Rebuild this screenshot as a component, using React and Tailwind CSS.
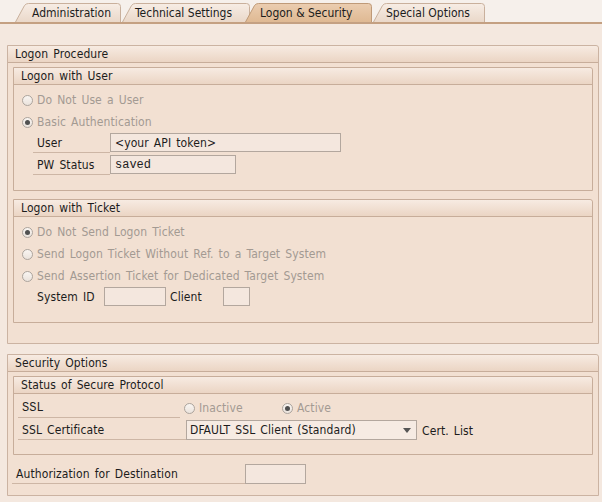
import React from "react";

const font = { fontFamily: '"DejaVu Sans Condensed", "DejaVu Sans", sans-serif' };

function Tab({ label, width, active, pl, className = "" }) {
  const h = 19;
  const d = `M0.5,${h} L9.5,2.5 Q11,0.5 13.5,0.5 L${width - 3.5},0.5 Q${width - 0.5},0.5 ${width - 0.5},3.5 L${width - 0.5},${h}`;
  const gid = active ? "tabA" : "tabI";
  return (
    <div className={`relative h-[19px] shrink-0 ${className}`} style={{ width }}>
      <svg className="absolute inset-0" width={width} height={h}>
        <defs>
          <linearGradient id="tabI" x1="0" y1="0" x2="0" y2="1">
            <stop offset="0" stopColor="#f7ede5" />
            <stop offset="1" stopColor="#ead8c9" />
          </linearGradient>
          <linearGradient id="tabA" x1="0" y1="0" x2="0" y2="1">
            <stop offset="0" stopColor="#ebcdb0" />
            <stop offset="1" stopColor="#dfb993" />
          </linearGradient>
        </defs>
        <path d={d} fill={`url(#${gid})`} stroke={active ? "#bf9a78" : "#c9b09c"} strokeWidth="1" />
      </svg>
      <span
        className="absolute top-[2px] text-[12px] leading-[16px] text-[#1c1c1c] whitespace-nowrap"
        style={{ left: pl }}
      >
        {label}
      </span>
    </div>
  );
}

function Radio({ checked, label, color = "text-[#a39a92]" }) {
  return (
    <div className="flex items-center">
      <span className="relative w-[11px] h-[11px] rounded-full border border-[#aca49d] bg-gradient-to-b from-[#f9f5f2] to-[#ebe3dc] flex items-center justify-center">
        {checked && <span className="w-[5px] h-[5px] rounded-full bg-[#505050]" />}
      </span>
      <span className={`ml-[4px] text-[12px] leading-[14px] ${color} whitespace-nowrap`}>{label}</span>
    </div>
  );
}

function GroupHeader({ title }) {
  return (
    <div className="h-[17px] border-b border-[#c7ad9a] bg-gradient-to-b from-[#f7ebe2] to-[#ebd5c4] rounded-tr-[3px] pl-[7px] text-[12px] leading-[17px] text-[#1c1c1c]">
      {title}
    </div>
  );
}

function Input({ width, children, mono }) {
  return (
    <div
      className={`h-[19px] border border-[#b3a79e] bg-[#f4e7de] pl-[4px] text-[12px] leading-[18px] text-[#1c1c1c] whitespace-nowrap overflow-hidden shrink-0 ${
        mono ? "font-['Liberation_Mono',monospace] tracking-normal [word-spacing:0px]" : ""
      }`}
      style={{ width }}
    >
      {children}
    </div>
  );
}

function Label({ width, children, mono, pl = 4 }) {
  return (
    <div
      className={`h-[20px] border-b border-[#cdb6a5] pt-[2px] text-[12px] leading-[17px] text-[#1c1c1c] whitespace-nowrap shrink-0 ${
        mono ? "font-['Liberation_Mono',monospace] tracking-normal [word-spacing:0px]" : ""
      }`}
      style={{ width, paddingLeft: pl }}
    >
      {children}
    </div>
  );
}

export default function App() {
  return (
    <div
      className="w-[602px] h-[502px] bg-[#f4e8df] overflow-hidden tracking-[0.1px] [word-spacing:1.5px]"
      style={font}
    >
      {/* Tab strip */}
      <div className="bg-[#f6f0eb] pt-[3px] pl-[15px] flex border-b-2 border-[#c4a082] h-[24px] tracking-normal [word-spacing:0px]">
        <Tab label="Administration" width={106} pl={17} />
        <Tab label="Technical Settings" width={128} pl={13} className="ml-[1px]" />
        <Tab label="Logon & Security" width={127} pl={15} active className="-ml-[5px]" />
        <Tab label="Special Options" width={112} pl={13} className="ml-[1px]" />
      </div>

      <div className="pt-[21px] pl-[7px] pr-[3px]">
        {/* Logon Procedure */}
        <div className="border border-[#cbb3a2] rounded-tr-[3px] bg-[#f2e0d2] h-[299px]">
          <GroupHeader title="Logon Procedure" />
          <div className="pt-[4px] pl-[5px] pr-[5px]">
            {/* Logon with User */}
            <div className="border border-[#c7ad9a] rounded-tr-[3px] h-[124px]">
              <GroupHeader title="Logon with User" />
              <div className="pt-[4px] pl-[8px]">
                <div className="h-[22px] flex items-center">
                  <Radio label="Do Not Use a User" />
                </div>
                <div className="h-[22px] flex items-center">
                  <Radio checked label="Basic Authentication" />
                </div>
                <div className="h-[22px] flex items-start pl-[11px]">
                  <Label width={77}>User</Label>
                  <Input width={231}>&lt;your API token&gt;</Input>
                </div>
                <div className="h-[22px] flex items-start pl-[11px]">
                  <Label width={77}>PW Status</Label>
                  <Input width={126} mono>saved</Input>
                </div>
              </div>
            </div>

            {/* Logon with Ticket */}
            <div className="mt-[8px] border border-[#c7ad9a] rounded-tr-[3px] h-[124px]">
              <GroupHeader title="Logon with Ticket" />
              <div className="pt-[4px] pl-[8px]">
                <div className="h-[22px] flex items-center">
                  <Radio checked label="Do Not Send Logon Ticket" />
                </div>
                <div className="h-[22px] flex items-center">
                  <Radio label="Send Logon Ticket Without Ref. to a Target System" />
                </div>
                <div className="h-[22px] flex items-center">
                  <Radio label="Send Assertion Ticket for Dedicated Target System" />
                </div>
                <div className="h-[22px] flex items-start pl-[15px]">
                  <div className="w-[67px] pt-[2px] text-[12px] leading-[17px] text-[#1c1c1c]">System ID</div>
                  <Input width={62}></Input>
                  <div className="w-[57px] pl-[4px] pt-[2px] text-[12px] leading-[17px] text-[#1c1c1c]">Client</div>
                  <Input width={27}></Input>
                </div>
              </div>
            </div>
          </div>
        </div>

        {/* Security Options */}
        <div className="mt-[10px] border border-[#cbb3a2] rounded-tr-[3px] bg-[#f2e0d2] h-[142px]">
          <GroupHeader title="Security Options" />
          <div className="pt-[4px] pl-[5px] pr-[5px]">
            <div className="border border-[#c7ad9a] rounded-tr-[3px] h-[79px]">
              <GroupHeader title="Status of Secure Protocol" />
              <div className="pt-[4px] pl-[4px]">
                <div className="h-[22px] flex items-start">
                  <Label width={162} mono>SSL</Label>
                  <div className="flex items-center h-[20px] pl-[4px]">
                    <div className="w-[98px]">
                      <Radio label="Inactive" />
                    </div>
                    <Radio checked label="Active" />
                  </div>
                </div>
                <div className="h-[22px] flex items-start">
                  <Label width={168}>SSL Certificate</Label>
                  <div className="relative w-[231px] h-[20px] border border-[#b3a79e] bg-[#f6ebe3] pl-[3px] text-[12px] leading-[18px] text-[#1c1c1c] whitespace-nowrap">
                    DFAULT SSL Client (Standard)
                    <svg className="absolute right-[5px] top-[7px]" width="8" height="5" viewBox="0 0 8 5">
                      <path d="M0 0 L8 0 L4 5 Z" fill="#555" />
                    </svg>
                  </div>
                  <div className="pl-[5px] pt-[1px] text-[12px] leading-[20px] text-[#1c1c1c]">Cert. List</div>
                </div>
              </div>
            </div>
            <div className="mt-[9px] flex items-start -ml-[1px]">
              <div className="w-[233px] h-[20px] border-b border-[#cdb6a5] pl-[4px] pt-[2px] text-[12px] leading-[17px] text-[#1c1c1c]">
                Authorization for Destination
              </div>
              <div className="w-[61px] h-[20px] border border-[#b3a79e] bg-[#f4e7de]" />
            </div>
          </div>
        </div>
      </div>
    </div>
  );
}
